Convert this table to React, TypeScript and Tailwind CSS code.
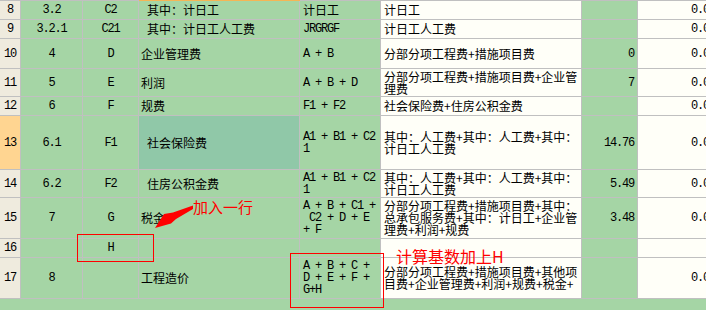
import React from "react";

type Row = {
  n: string;
  b: string;
  c: string;
  d: string;
  dIndent?: boolean;
  e: string[];
  f: string[];
  g: string;
  h: string;
};

const rows: Row[] = [
  { n: "8", b: "3.2", c: "C2", d: "其中：计日工", dIndent: true, e: ["计日工"], f: ["计日工"], g: "", h: "0.00" },
  { n: "9", b: "3.2.1", c: "C21", d: "其中：计日工人工费", dIndent: true, e: ["JRGRGF"], f: ["计日工人工费"], g: "", h: "0.00" },
  { n: "10", b: "4", c: "D", d: "企业管理费", e: ["A + B"], f: ["分部分项工程费+措施项目费"], g: "0", h: "0.00" },
  { n: "11", b: "5", c: "E", d: "利润", e: ["A + B + D"], f: ["分部分项工程费+措施项目费+企业管", "理费"], g: "7", h: "0.00" },
  { n: "12", b: "6", c: "F", d: "规费", e: ["F1 + F2"], f: ["社会保险费+住房公积金费"], g: "", h: "0.00" },
  { n: "13", b: "6.1", c: "F1", d: "社会保险费", dIndent: true, e: ["A1 + B1 + C2", "1"], f: ["其中：人工费+其中：人工费+其中：", "计日工人工费"], g: "14.76", h: "0.00" },
  { n: "14", b: "6.2", c: "F2", d: "住房公积金费", dIndent: true, e: ["A1 + B1 + C2", "1"], f: ["其中：人工费+其中：人工费+其中：", "计日工人工费"], g: "5.49", h: "0.00" },
  {
    n: "15", b: "7", c: "G", d: "税金",
    e: ["A + B + C1 +", " C2 + D + E", "+ F"],
    f: ["分部分项工程费+措施项目费+其中：", "总承包服务费+其中：计日工+企业管", "理费+利润+规费"],
    g: "3.48", h: "0.00",
  },
  { n: "16", b: "", c: "H", d: "", e: [], f: [], g: "", h: "" },
  {
    n: "17", b: "8", c: "", d: "工程造价",
    e: ["A + B + C +", "D + E + F +", "G+H"],
    f: ["分部分项工程费+措施项目费+其他项", "目费+企业管理费+利润+规费+税金+"],
    g: "", h: "0.00",
  },
];

const mono = "font-['Liberation_Mono',monospace] text-[12px] tracking-[-1.2px] leading-[12px]";
const cjk = "font-['Noto_Sans_CJK_SC',sans-serif] text-[12px] leading-[12px]";
const hasCjk = (s: string) => /[\u3000-\u9fff\uff00-\uffef]/.test(s);

const Lines = ({ lines }: { lines: string[] }) => (
  <div className="flex flex-col">
    {lines.map((l, i) => (
      <div key={i} className={`whitespace-pre text-black ${hasCjk(l) ? cjk : mono}`}>
        {l}
      </div>
    ))}
  </div>
);

export default function App() {
  return (
    <div className="relative w-[706px] h-[310px] overflow-hidden bg-[#a5d5a5]">
      <div className="flex h-px w-[718px]">
        <div className="w-[139px] bg-[#c0c0c0]" />
        <div className="w-[161px] bg-[#f5b556]" />
        <div className="flex-1 bg-[#c0c0c0]" />
      </div>
      <div className="grid w-[718px] grid-cols-[20px_61px_55px_160px_80px_200px_55px_80px] grid-rows-[18px_18px_29px_27px_18px_53px_27px_40px_18px_40px] gap-px border-b border-[#c0c0c0] bg-[#c0c0c0]">
        {rows.map((r) => {
          const sel = r.n === "13";
          return (
            <React.Fragment key={r.n}>
              <div className={`flex items-center justify-center ${sel ? "bg-[#ffd591]" : "bg-[#efebde]"}`}>
                <Lines lines={[r.n]} />
              </div>
              <div className="flex items-center justify-center bg-[#a5d5a5]">
                <Lines lines={[r.b]} />
              </div>
              <div className="flex items-center justify-center bg-[#a5d5a5]">
                <Lines lines={[r.c]} />
              </div>
              <div className={`flex items-center ${r.dIndent ? "pl-[8px]" : "pl-[2px]"} ${sel ? "bg-[#90c8a8]" : "bg-[#a5d5a5]"}`}>
                <Lines lines={[r.d]} />
              </div>
              <div className="flex items-center pl-[3px] bg-[#a5d5a5]">
                <Lines lines={r.e} />
              </div>
              <div className="flex items-center pl-[3px] bg-[#fffff8] overflow-hidden">
                <Lines lines={r.f} />
              </div>
              <div className="flex items-center justify-end pr-[3px] bg-[#a5d5a5]">
                <Lines lines={[r.g]} />
              </div>
              <div className="flex items-center justify-end pr-[3px] bg-[#fffff8]">
                <Lines lines={[r.h]} />
              </div>
            </React.Fragment>
          );
        })}
      </div>

      {/* annotations */}
      <div className="absolute left-[193px] top-[199px] whitespace-nowrap font-['Noto_Sans_CJK_SC',sans-serif] text-[15px] leading-none text-[#ff0000]">
        加入一行
      </div>
      <svg className="absolute left-0 top-0" width="706" height="310" viewBox="0 0 706 310">
        <polygon points="193,205.5 173,212.5 164,214 155,228 171,223.5 176,219 193,209" fill="#ff0000" />
      </svg>
      <div className="absolute left-[77px] top-[234px] h-[28px] w-[77px] border border-[#ff0000]" />
      <div className="absolute left-[290px] top-[253px] h-[55px] w-[94px] border border-[#ff0000]" />
      <div className="absolute left-[396px] top-[248px] whitespace-nowrap font-['Noto_Sans_CJK_SC',sans-serif] text-[16px] leading-none text-[#ff0000]">
        计算基数加上H
      </div>
    </div>
  );
}
